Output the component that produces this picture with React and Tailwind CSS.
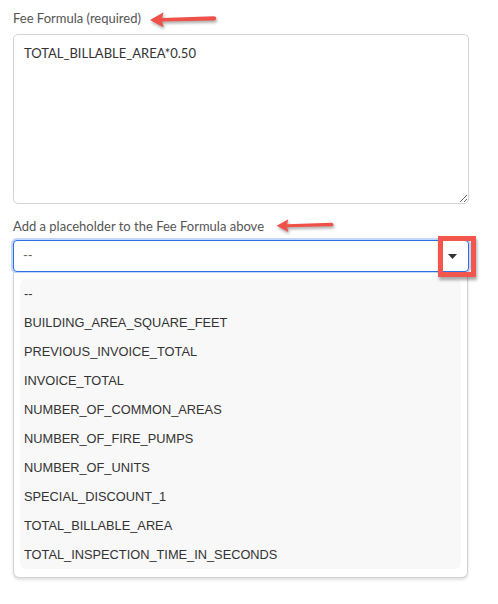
import React from "react";

const options = [
  "--",
  "BUILDING_AREA_SQUARE_FEET",
  "PREVIOUS_INVOICE_TOTAL",
  "INVOICE_TOTAL",
  "NUMBER_OF_COMMON_AREAS",
  "NUMBER_OF_FIRE_PUMPS",
  "NUMBER_OF_UNITS",
  "SPECIAL_DISCOUNT_1",
  "TOTAL_BILLABLE_AREA",
  "TOTAL_INSPECTION_TIME_IN_SECONDS",
];

// Hand-drawn style callout arrow pointing left
function CalloutArrow({ className }) {
  return (
    <svg
      className={className}
      viewBox="0 0 72 20"
      width="70"
      height="20"
      style={{ filter: "drop-shadow(1px 2px 1.5px rgba(0,0,0,0.35))" }}
    >
      <path
        d="M2 11 L16 3 L14.5 9 L68 7.2 Q70.5 7.6 70.3 9.6 Q70 11.6 67.5 11.6 L14.5 12.6 L16 18.5 Z"
        fill="#ef5149"
      />
    </svg>
  );
}

export default function App() {
  return (
    <div
      className="w-[498px] h-[604px] bg-white px-[13px] pt-[11px]"
      style={{ fontFamily: "Lato, 'Noto Sans', sans-serif" }}
    >
      <div className="flex flex-col w-[456px]">
        <div className="relative flex items-center h-[16px] text-[13px] text-[#555]">
          Fee Formula (required)
          <CalloutArrow className="absolute left-[135px] top-[-2px]" />
        </div>

        <textarea
          readOnly
          defaultValue="TOTAL_BILLABLE_AREA*0.50"
          className="mt-[7px] block w-[456px] h-[170px] rounded-[5px] border border-[#d4d4d4] bg-white px-[10px] py-[9px] text-[13px] leading-[18px] text-[#333] outline-none resize-y"
          style={{ fontFamily: "Lato, 'Noto Sans', sans-serif" }}
        />

        <div className="relative mt-[15px] flex items-center h-[16px] text-[13px] text-[#555]">
          Add a placeholder to the Fee Formula above
          <CalloutArrow className="absolute left-[262px] top-[-3px] w-[60px] h-[18px]" />
        </div>

        <div className="relative mt-[5px] flex flex-col">
          <div className="flex items-center justify-between h-[32px] rounded-[4px] border border-[#2f6fe0] shadow-[0_0_0_2px_rgba(140,180,245,0.55)] bg-white pl-[9px] pr-[11px]">
            <span className="text-[13px] text-[#666]">--</span>
            <svg width="9" height="5" viewBox="0 0 9 5">
              <path d="M0 0 L9 0 L4.5 5 Z" fill="#333" />
            </svg>
          </div>

          {/* highlight box around the toggle */}
          <div className="absolute left-[425px] top-[-4px] w-[38px] h-[41px] border-[5px] border-[#f2564c] shadow-[1px_3px_3px_rgba(0,0,0,0.35)]" />

          <div className="mt-[1px] w-[455px] rounded-b-[6px] border border-t-0 border-[#cfd3d8] bg-white px-[6px] pt-[6px] pb-[8px] shadow-[0_2px_3px_rgba(0,0,0,0.12)]">
            <ul
              className="flex flex-col rounded-[6px] bg-[#f8f8f8]"
              style={{ fontFamily: "'Liberation Sans', Arial, sans-serif" }}
            >
              {options.map((o) => (
                <li
                  key={o}
                  className="flex items-center h-[29px] pl-[4px] text-[12.8px] text-[#333]"
                >
                  {o}
                </li>
              ))}
            </ul>
          </div>
        </div>
      </div>
    </div>
  );
}
